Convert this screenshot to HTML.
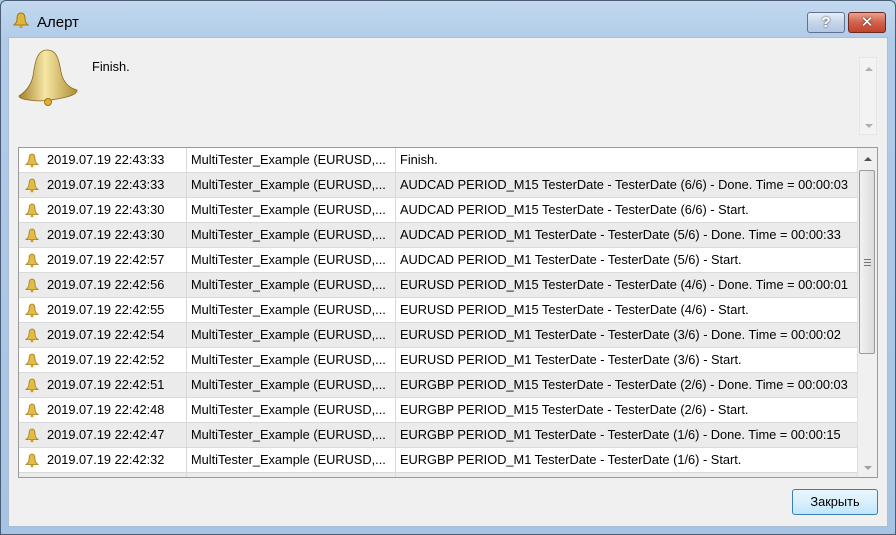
<!DOCTYPE html>
<html><head><meta charset="utf-8"><style>
*{margin:0;padding:0;box-sizing:border-box}
body{width:896px;height:535px;overflow:hidden;font-family:"Liberation Sans","DejaVu Sans",sans-serif;font-size:12.8px;color:#000;background:#a9c7e6}
.win{position:absolute;left:0;top:0;width:896px;height:535px;border:1px solid #4a5d75;border-radius:6px 6px 0 0;background:linear-gradient(#c3d8ef,#b0cbe8 40px,#a7c4e4)}
.title{position:absolute;left:36px;top:13px;font-size:15px;color:#000}
.client{position:absolute;left:8px;top:37px;width:880px;height:490px;background:#f0f0f0;border:1px solid #a9bfd8}
.btn{position:absolute;top:11px;height:21px;border:1px solid #5f7391;border-radius:3px}
.list{position:absolute;left:18px;top:147px;width:860px;height:331px;border:1px solid #9a9a9a;background:#fff;overflow:hidden}
.row{position:absolute;left:0;width:838px;height:25px;border-bottom:1px solid #d9d9d9;line-height:24px;font-size:12.8px}
.row.g{background:#ebebeb}
.row span{position:absolute;top:0;white-space:nowrap}
.c1{left:28px}.c2{left:167px;border-left:1px solid #d9d9d9;padding-left:4px;height:25px}.c3{left:376px;border-left:1px solid #d9d9d9;padding-left:4px;height:25px}
.bi{position:absolute;left:6px;top:5px}
.sb{position:absolute;left:838px;top:0;width:20px;height:331px;background:#f0f0f0;border-left:1px solid #e0e0e0}
</style></head><body>
<div class="win">
<svg style="position:absolute;left:12px;top:11px" width="16" height="17" viewBox="0 0 16 17"><path d="M8 1c-3 0-4 3-4 6 0 3-1 4-3 6h14c-2-2-3-3-3-6 0-3-1-6-4-6z" fill="#e2b63c" stroke="#9c7a1a"/><circle cx="8" cy="14.5" r="1.6" fill="#d49a20"/></svg>
<div class="title">Алерт</div>
<div class="btn" style="left:806px;width:38px;background:linear-gradient(#e6eef8,#c5d5ea 50%,#b3c7e2);text-align:center;color:#fff;font-weight:bold;font-size:15px;line-height:19px;text-shadow:0 0 2px #333">?</div>
<div class="btn" style="left:847px;width:38px;background:linear-gradient(#e8a293,#d2614b 50%,#c2432d);border-color:#6b2a20;text-align:center;color:#fff;font-weight:bold;font-size:15px;line-height:19px;text-shadow:0 0 2px #333">✕</div>
</div>
<div class="client">
<svg style="position:absolute;left:8px;top:8px" width="64" height="62" viewBox="0 0 64 62"><defs><linearGradient id="bg" x1="0" x2="1"><stop offset="0" stop-color="#a2802c"/><stop offset=".45" stop-color="#f6e7a4"/><stop offset="1" stop-color="#b08d34"/></linearGradient></defs><path d="M30 4c-10 0-12 12-14 26-2 10-8 16-14 20 0 4 20 6 32 4 12-2 26-4 26-10-8-2-14-8-16-18C42 14 40 4 30 4z" fill="url(#bg)" stroke="#8a6a1c" stroke-width=".8"/><circle cx="31" cy="56" r="3.5" fill="#e0b030" stroke="#9a7415"/></svg>
<div style="position:absolute;left:83px;top:21px">Finish.</div>
<div style="position:absolute;left:850px;top:19px;width:18px;height:78px;background:#f3f3f3;border:1px solid #e6e6e6"><div style="position:absolute;left:5px;top:9px;border:4px solid transparent;border-bottom:4px solid #b0b0b0;border-top:0"></div><div style="position:absolute;left:5px;top:66px;border:4px solid transparent;border-top:4px solid #b0b0b0;border-bottom:0"></div></div>
</div>
<div class="list">
<div id="rows"></div>
</div>
<div style="position:absolute;left:792px;top:489px;width:86px;height:26px;border:1px solid #3c7fb1;border-radius:3px;background:linear-gradient(#eaf6fd,#d9f0fc 50%,#bee6fd);text-align:center;line-height:24px;font-size:12.8px">Закрыть</div>
<script>
var d=[["2019.07.19 22:43:33","Finish."],["2019.07.19 22:43:33","AUDCAD PERIOD_M15 TesterDate - TesterDate (6/6) - Done. Time = 00:00:03"],["2019.07.19 22:43:30","AUDCAD PERIOD_M15 TesterDate - TesterDate (6/6) - Start."],["2019.07.19 22:43:30","AUDCAD PERIOD_M1 TesterDate - TesterDate (5/6) - Done. Time = 00:00:33"],["2019.07.19 22:42:57","AUDCAD PERIOD_M1 TesterDate - TesterDate (5/6) - Start."],["2019.07.19 22:42:56","EURUSD PERIOD_M15 TesterDate - TesterDate (4/6) - Done. Time = 00:00:01"],["2019.07.19 22:42:55","EURUSD PERIOD_M15 TesterDate - TesterDate (4/6) - Start."],["2019.07.19 22:42:54","EURUSD PERIOD_M1 TesterDate - TesterDate (3/6) - Done. Time = 00:00:02"],["2019.07.19 22:42:52","EURUSD PERIOD_M1 TesterDate - TesterDate (3/6) - Start."],["2019.07.19 22:42:51","EURGBP PERIOD_M15 TesterDate - TesterDate (2/6) - Done. Time = 00:00:03"],["2019.07.19 22:42:48","EURGBP PERIOD_M15 TesterDate - TesterDate (2/6) - Start."],["2019.07.19 22:42:47","EURGBP PERIOD_M1 TesterDate - TesterDate (1/6) - Done. Time = 00:00:15"],["2019.07.19 22:42:32","EURGBP PERIOD_M1 TesterDate - TesterDate (1/6) - Start."],["",""]];
var bell='<svg class="bi" width="14" height="15" viewBox="0 0 14 15"><path d="M7 1C4.5 1 4 3.5 4 6c0 2.5-1 4-3 5.5h12C11 10 10 8.5 10 6 10 3.5 9.5 1 7 1z" fill="#e3bb45" stroke="#a07c1c" stroke-width=".8"/><circle cx="7" cy="13" r="1.4" fill="#d39a1e"/></svg>';
var h='';d.forEach(function(r,i){h+='<div class="row'+(i%2?' g':'')+'" style="top:'+(i*25)+'px">'+(r[0]?bell+'<span class="c1">'+r[0]+'</span><span class="c2">MultiTester_Example (EURUSD,...</span><span class="c3">'+r[1]+'</span>':'<span class="c2"></span><span class="c3"></span>')+'</div>'});
h+='<div class="sb"><div style="position:absolute;left:6px;top:9px;border:4px solid transparent;border-bottom:4px solid #505050;border-top:0"></div><div style="position:absolute;left:1px;top:22px;width:16px;height:184px;border:1px solid #9a9a9a;border-radius:2px;background:linear-gradient(90deg,#f2f2f2,#dcdcdc)"><div style="position:absolute;left:4px;top:88px;width:7px;height:7px;border-top:1px solid #777;border-bottom:1px solid #777"><div style="margin-top:2px;border-top:1px solid #777"></div></div></div><div style="position:absolute;left:6px;top:318px;border:4px solid transparent;border-top:4px solid #a0a0a0;border-bottom:0"></div></div>';
document.getElementById('rows').innerHTML=h;
</script>
</body></html>
